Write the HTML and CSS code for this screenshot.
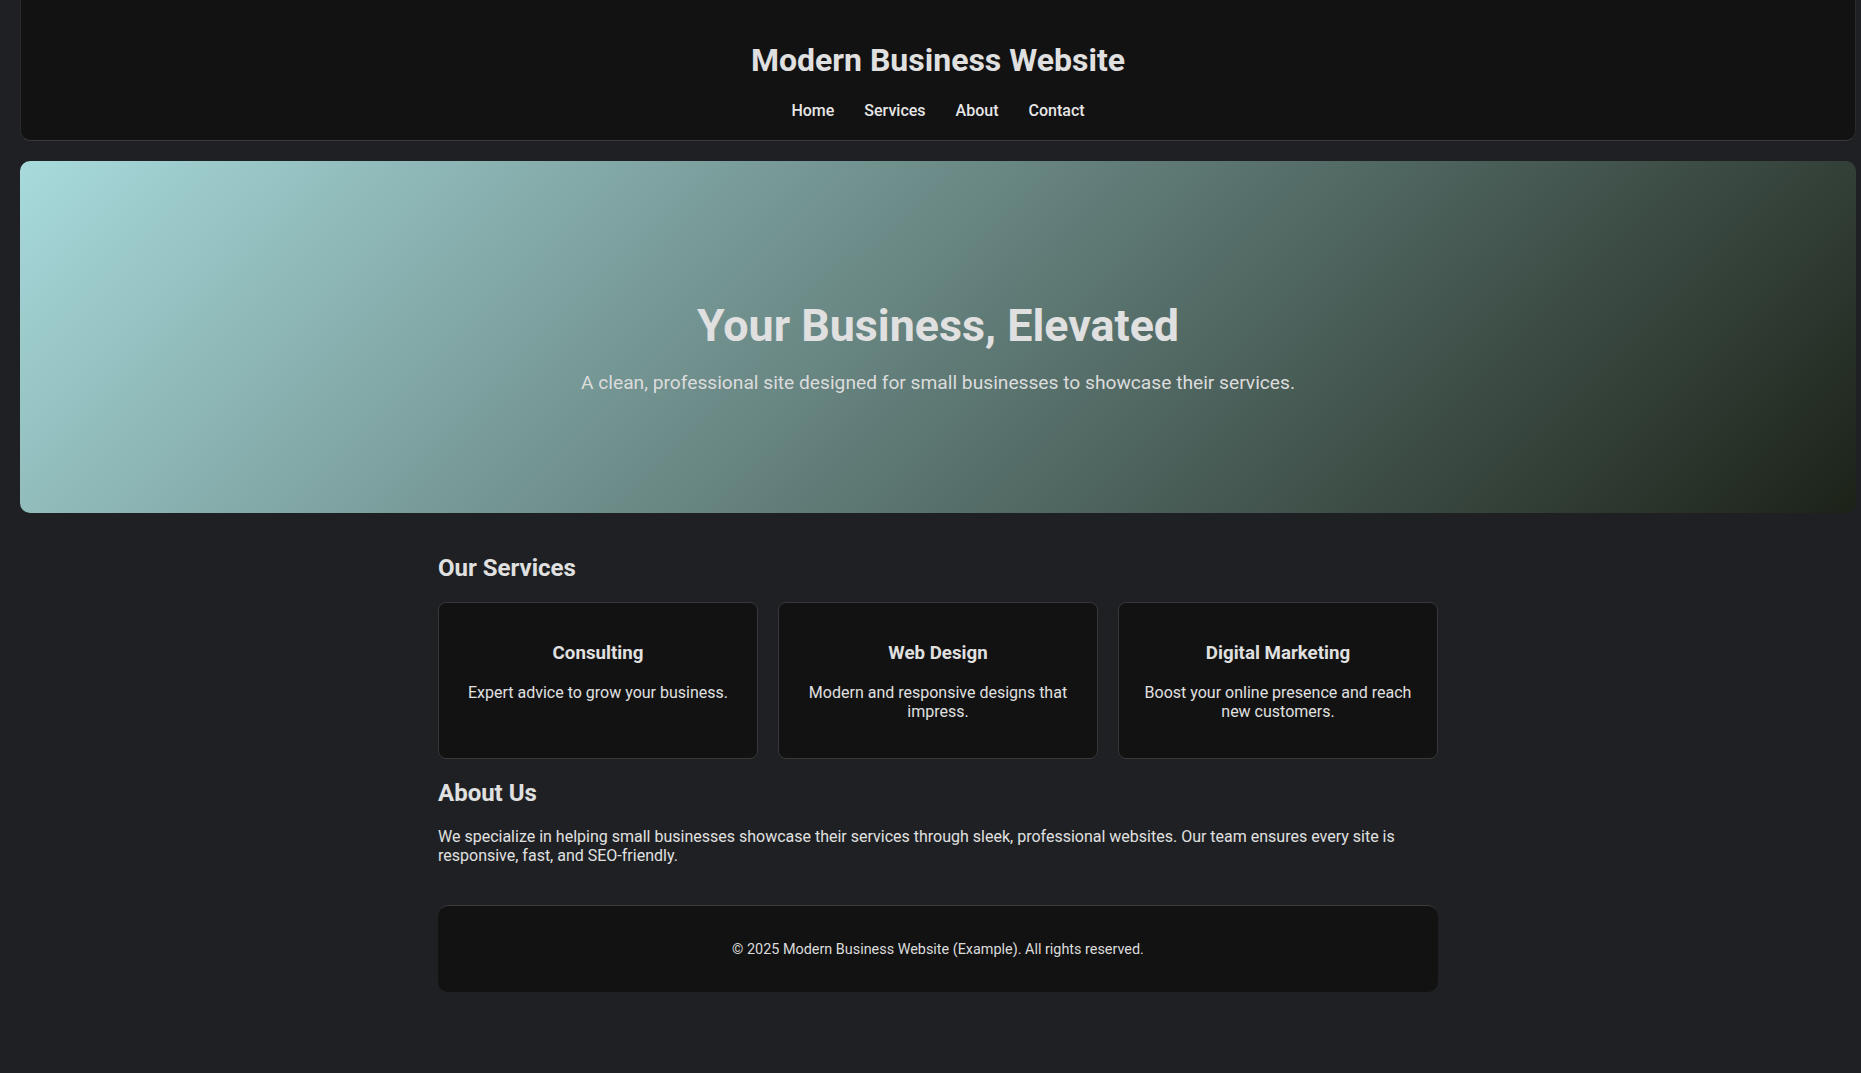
FILE: index.html
```html
<!DOCTYPE html>
<html lang="en">
<head>
<meta charset="UTF-8">
<title>Modern Business Website</title>
<link rel="stylesheet" href="styles.css">
</head>
<body>
  <header class="site-header">
    <h1 class="site-title">Modern Business Website</h1>
    <nav class="site-nav">
      <a href="#home">Home</a>
      <a href="#services">Services</a>
      <a href="#about">About</a>
      <a href="#contact">Contact</a>
    </nav>
  </header>

  <section class="hero" id="home">
    <h2 class="hero-title">Your Business, Elevated</h2>
    <p class="hero-text">A clean, professional site designed for small businesses to showcase their services.</p>
  </section>

  <main class="container">
    <section class="services" id="services">
      <h2 class="section-title">Our Services</h2>
      <div class="cards">
        <div class="card">
          <h3>Consulting</h3>
          <p>Expert advice to grow your business.</p>
        </div>
        <div class="card">
          <h3>Web Design</h3>
          <p>Modern and responsive designs that impress.</p>
        </div>
        <div class="card">
          <h3>Digital Marketing</h3>
          <p>Boost your online presence and reach new customers.</p>
        </div>
      </div>
    </section>

    <section class="about" id="about">
      <h2 class="section-title">About Us</h2>
      <p>We specialize in helping small businesses showcase their services through sleek, professional websites. Our team ensures every site is responsive, fast, and SEO-friendly.</p>
    </section>

    <footer class="site-footer" id="contact">
      <p>&copy; 2025 Modern Business Website (Example). All rights reserved.</p>
    </footer>
  </main>
</body>
</html>
```

FILE: styles.css
```css
html, body {
  background: #1f2023;
}

body {
  margin: 0;
  padding: 0 5px 60px 20px;
  font-family: Roboto, "Liberation Sans", Arial, sans-serif;
  color: #e0e0e0;
  line-height: normal;
}

.site-header {
  background: #121212;
  border-bottom: 1px solid #3a3a3c;
  border-left: 1px solid #2a2a2c;
  border-right: 1px solid #2a2a2c;
  border-radius: 0 0 10px 10px;
  padding: 20px 20px 20px;
  text-align: center;
}

.site-title {
  margin: 21px 0 22px;
  font-size: 32px;
  font-weight: 700;
  color: #e0e0e0;
}

.site-nav {
  display: flex;
  justify-content: center;
  gap: 30px;
}

.site-nav a {
  color: #e6e6e6;
  text-decoration: none;
  font-size: 16px;
  font-weight: 500;
}

.hero {
  margin-top: 20px;
  padding: 138px 20px 119px;
  border-radius: 10px;
  background: linear-gradient(135deg, #a8dadc 0%, #1c2218 100%);
  text-align: center;
}

.hero-title {
  margin: 0 0 19px;
  font-size: 44.8px;
  font-weight: 700;
  color: #e0e0e0;
}

.hero-text {
  margin: 0;
  font-size: 19.2px;
  color: #dcdcdc;
}

.container {
  max-width: 1000px;
  margin: 0 auto;
  padding-top: 21px;
}

.section-title {
  font-size: 24px;
  font-weight: 700;
  margin: 19.92px 0;
  color: #e0e0e0;
}

.cards {
  display: grid;
  grid-template-columns: repeat(3, 1fr);
  gap: 20px;
}

.card {
  background: #121212;
  border: 1px solid #38383a;
  border-radius: 8px;
  padding: 20px 20px 21px;
  text-align: center;
}

.card h3 {
  font-size: 18.72px;
  font-weight: 700;
  margin: 19px 0 19.5px;
  color: #e0e0e0;
}

.card p {
  font-size: 16px;
  margin: 16px 0;
  color: #e0e0e0;
}

.about p {
  font-size: 16px;
  margin: 16px 0;
}

.site-footer {
  margin-top: 40px;
  background: #121212;
  border-top: 1px solid #3a3a3c;
  border-radius: 10px;
  padding: 20px;
  text-align: center;
}

.site-footer p {
  margin: 14.4px 0;
  font-size: 14.4px;
  color: #dcdcdc;
}
```
